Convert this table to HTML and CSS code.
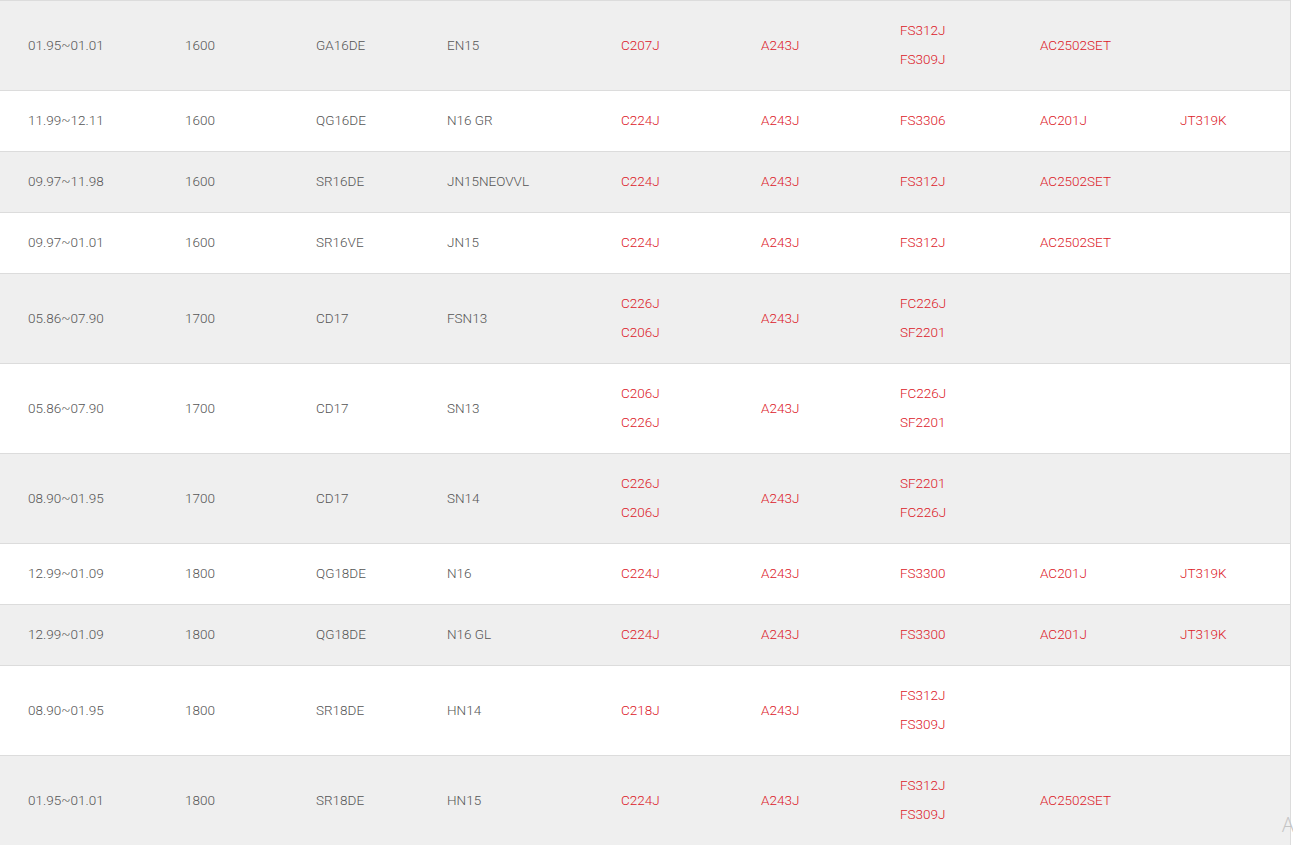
FILE: index.html
```html
<!DOCTYPE html>
<html>
<head>
<meta charset="utf-8">
<link rel="stylesheet" href="styles.css">
</head>
<body>
<div class="table">
  <div class="row odd">
    <div class="cell">01.95~01.01</div><div class="cell">1600</div><div class="cell">GA16DE</div><div class="cell">EN15</div>
    <div class="cell red">C207J</div><div class="cell red">A243J</div><div class="cell red">FS312J<br>FS309J</div><div class="cell red">AC2502SET</div><div class="cell red"></div>
  </div>
  <div class="row">
    <div class="cell">11.99~12.11</div><div class="cell">1600</div><div class="cell">QG16DE</div><div class="cell">N16 GR</div>
    <div class="cell red">C224J</div><div class="cell red">A243J</div><div class="cell red">FS3306</div><div class="cell red">AC201J</div><div class="cell red">JT319K</div>
  </div>
  <div class="row odd">
    <div class="cell">09.97~11.98</div><div class="cell">1600</div><div class="cell">SR16DE</div><div class="cell">JN15NEOVVL</div>
    <div class="cell red">C224J</div><div class="cell red">A243J</div><div class="cell red">FS312J</div><div class="cell red">AC2502SET</div><div class="cell red"></div>
  </div>
  <div class="row">
    <div class="cell">09.97~01.01</div><div class="cell">1600</div><div class="cell">SR16VE</div><div class="cell">JN15</div>
    <div class="cell red">C224J</div><div class="cell red">A243J</div><div class="cell red">FS312J</div><div class="cell red">AC2502SET</div><div class="cell red"></div>
  </div>
  <div class="row odd">
    <div class="cell">05.86~07.90</div><div class="cell">1700</div><div class="cell">CD17</div><div class="cell">FSN13</div>
    <div class="cell red">C226J<br>C206J</div><div class="cell red">A243J</div><div class="cell red">FC226J<br>SF2201</div><div class="cell red"></div><div class="cell red"></div>
  </div>
  <div class="row">
    <div class="cell">05.86~07.90</div><div class="cell">1700</div><div class="cell">CD17</div><div class="cell">SN13</div>
    <div class="cell red">C206J<br>C226J</div><div class="cell red">A243J</div><div class="cell red">FC226J<br>SF2201</div><div class="cell red"></div><div class="cell red"></div>
  </div>
  <div class="row odd">
    <div class="cell">08.90~01.95</div><div class="cell">1700</div><div class="cell">CD17</div><div class="cell">SN14</div>
    <div class="cell red">C226J<br>C206J</div><div class="cell red">A243J</div><div class="cell red">SF2201<br>FC226J</div><div class="cell red"></div><div class="cell red"></div>
  </div>
  <div class="row">
    <div class="cell">12.99~01.09</div><div class="cell">1800</div><div class="cell">QG18DE</div><div class="cell">N16</div>
    <div class="cell red">C224J</div><div class="cell red">A243J</div><div class="cell red">FS3300</div><div class="cell red">AC201J</div><div class="cell red">JT319K</div>
  </div>
  <div class="row odd">
    <div class="cell">12.99~01.09</div><div class="cell">1800</div><div class="cell">QG18DE</div><div class="cell">N16 GL</div>
    <div class="cell red">C224J</div><div class="cell red">A243J</div><div class="cell red">FS3300</div><div class="cell red">AC201J</div><div class="cell red">JT319K</div>
  </div>
  <div class="row">
    <div class="cell">08.90~01.95</div><div class="cell">1800</div><div class="cell">SR18DE</div><div class="cell">HN14</div>
    <div class="cell red">C218J</div><div class="cell red">A243J</div><div class="cell red">FS312J<br>FS309J</div><div class="cell red"></div><div class="cell red"></div>
  </div>
  <div class="row odd">
    <div class="cell">01.95~01.01</div><div class="cell">1800</div><div class="cell">SR18DE</div><div class="cell">HN15</div>
    <div class="cell red">C224J</div><div class="cell red">A243J</div><div class="cell red">FS312J<br>FS309J</div><div class="cell red">AC2502SET</div><div class="cell red"></div>
  </div>
</div>
<div class="watermark">A</div>
</body>
</html>
```
FILE: styles.css
```css
html, body {
  margin: 0;
  padding: 0;
  background: #ffffff;
  overflow: hidden;
  height: 845px;
}
body {
  font-family: Roboto, "Liberation Sans", sans-serif;
  font-weight: 300;
  font-size: 13.5px;
  color: #555555;
}
.table {
  width: 1291px;
  border-right: 1px solid #dcdcdc;
  border-bottom: 1px solid #dcdcdc;
  box-sizing: border-box;
}
.row {
  display: grid;
  grid-template-columns: 157px 131px 131px 174px 140px 139px 140px 140px 138px;
  border-top: 1px solid #dcdcdc;
  background: #ffffff;
  padding: 15px 0 16px 0;
}
.row.odd {
  background: #efefef;
}
.cell {
  padding-left: 28px;
  line-height: 29px;
  align-self: center;
  white-space: nowrap;
}
.red {
  color: #dc2029;
}
.watermark {
  position: absolute;
  left: 1282px;
  top: 812px;
  font-family: "Open Sans", sans-serif;
  font-size: 20px;
  line-height: 26px;
  color: #c4c4c4;
}
```
